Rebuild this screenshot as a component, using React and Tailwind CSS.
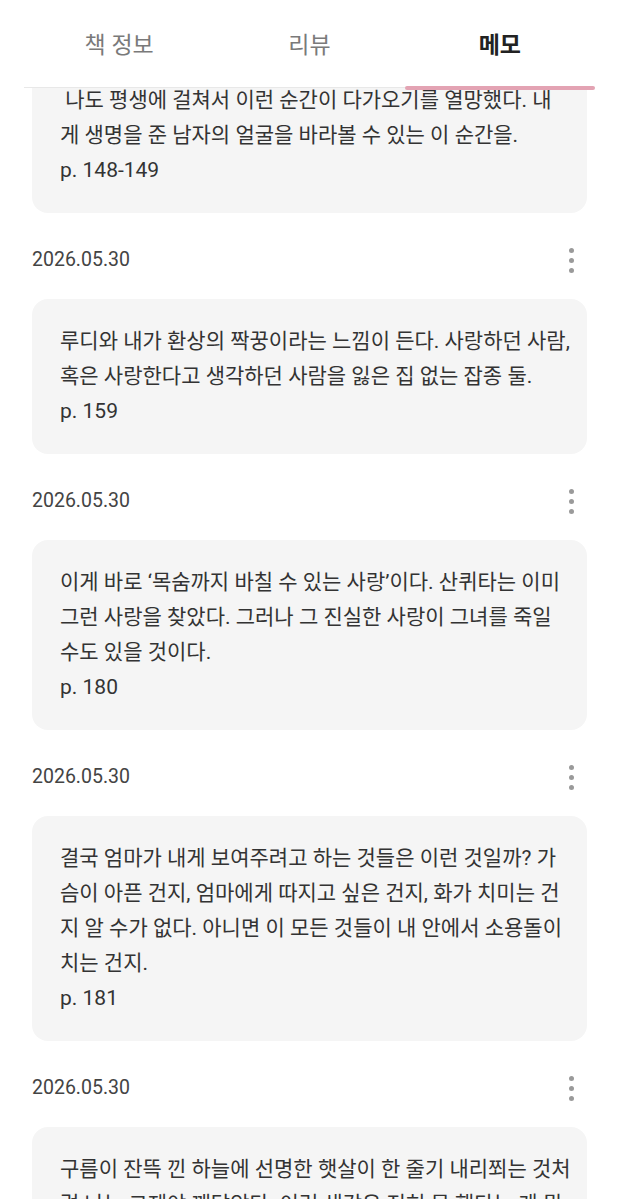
import React from "react";

const memos = [
  {
    date: null,
    lines: [
      " 나도 평생에 걸쳐서 이런 순간이 다가오기를 열망했다. 내",
      "게 생명을 준 남자의 얼굴을 바라볼 수 있는 이 순간을.",
      "p. 148-149",
    ],
  },
  {
    date: "2026.05.30",
    lines: [
      "루디와 내가 환상의 짝꿍이라는 느낌이 든다. 사랑하던 사람,",
      "혹은 사랑한다고 생각하던 사람을 잃은 집 없는 잡종 둘.",
      "p. 159",
    ],
  },
  {
    date: "2026.05.30",
    lines: [
      "이게 바로 ‘목숨까지 바칠 수 있는 사랑’이다. 산퀴타는 이미",
      "그런 사랑을 찾았다. 그러나 그 진실한 사랑이 그녀를 죽일",
      "수도 있을 것이다.",
      "p. 180",
    ],
  },
  {
    date: "2026.05.30",
    lines: [
      "결국 엄마가 내게 보여주려고 하는 것들은 이런 것일까? 가",
      "슴이 아픈 건지, 엄마에게 따지고 싶은 건지, 화가 치미는 건",
      "지 알 수가 없다. 아니면 이 모든 것들이 내 안에서 소용돌이",
      "치는 건지.",
      "p. 181",
    ],
  },
  {
    date: "2026.05.30",
    lines: [
      "구름이 잔뜩 낀 하늘에 선명한 햇살이 한 줄기 내리쬐는 것처",
      "럼 나는 그제야 깨달았다. 이런 생각은 전혀 못 했다는 게 뭔",
      "지 모르게 마음이 아팠다.",
      "p. 190",
    ],
  },
];

function Dots() {
  return (
    <div className="flex w-[32px] h-[38px] flex-col items-center justify-center gap-[5px]">
      <span className="block h-[5px] w-[5px] rounded-full bg-[#9a9a9a]" />
      <span className="block h-[5px] w-[5px] rounded-full bg-[#9a9a9a]" />
      <span className="block h-[5px] w-[5px] rounded-full bg-[#9a9a9a]" />
    </div>
  );
}

export default function App() {
  const font = { fontFamily: 'Roboto, "Noto Sans CJK KR", sans-serif' };
  return (
    <div
      className="h-[1199px] w-[619px] overflow-hidden bg-white"
      style={font}
    >
      <div className="relative z-10 h-[88px] bg-white">
        <div className="mx-[24px] flex h-full border-b border-[#e8e8e8]">
          <div className="flex flex-1 items-center justify-center pt-[6px] text-[23px] text-[#7a7a7a]">
            책 정보
          </div>
          <div className="flex flex-1 items-center justify-center pt-[6px] text-[23px] text-[#7a7a7a]">
            리뷰
          </div>
          <div className="relative flex flex-1 items-center justify-center pt-[6px] text-[23px] font-bold text-[#222222]">
            메모
            <span className="absolute -bottom-[3px] left-0 right-0 h-[4px] rounded-full bg-[#e3a3b3]" />
          </div>
        </div>
      </div>
      <div className="-mt-[30px] px-[32px]">
        {memos.map((m, i) => (
          <div key={i}>
            {m.date && (
              <div className="mb-[20px] mt-[28px] flex h-[38px] items-center justify-between">
                <span className="text-[19.5px] text-[#444444]">{m.date}</span>
                <Dots />
              </div>
            )}
            <div className="rounded-[16px] bg-[#f5f5f5] py-[25px] pl-[28px] pr-[10px] text-[21px] leading-[35px] text-[#333333]">
              {m.lines.map((l, j) => (
                <div key={j} className="whitespace-pre">
                  {l}
                </div>
              ))}
            </div>
          </div>
        ))}
      </div>
    </div>
  );
}
